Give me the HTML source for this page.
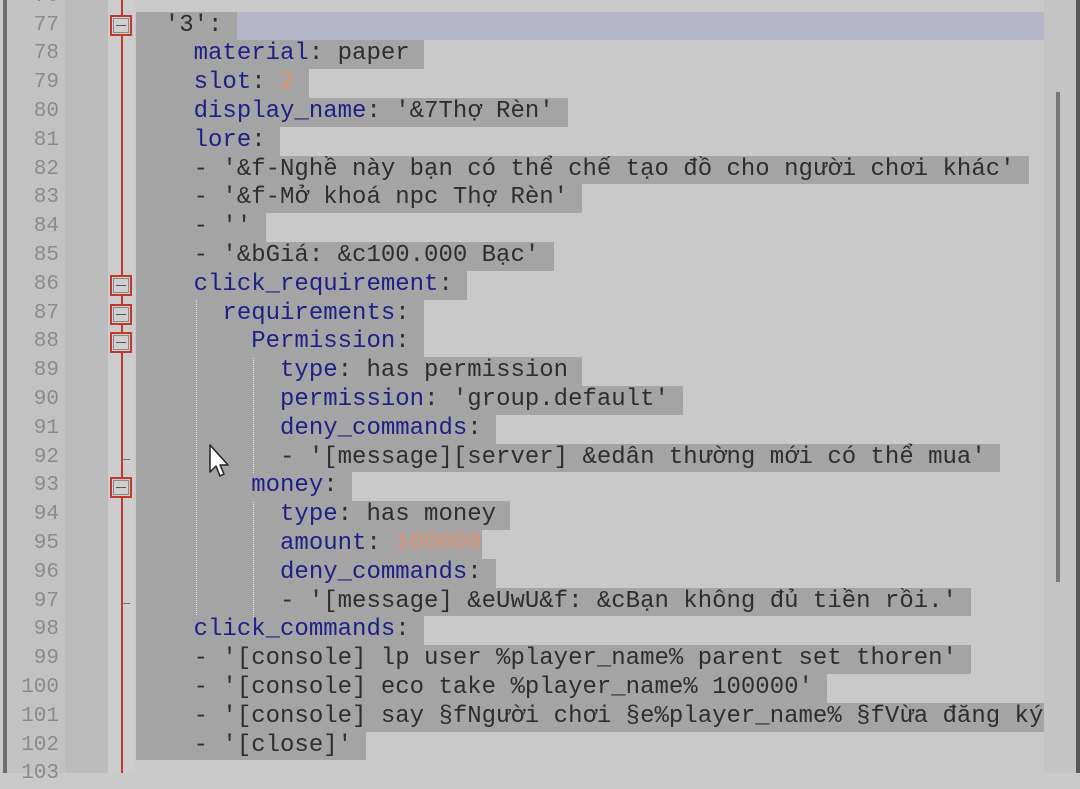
<!DOCTYPE html>
<html><head><meta charset="utf-8"><style>
html,body{margin:0;padding:0;width:1080px;height:773px;overflow:hidden;background:#c9c9c9;}
.ln{position:absolute;left:7px;top:0;width:58px;height:773px;background:#c2c2c2;}
.ln2{position:absolute;left:65px;top:0;width:43px;height:773px;background:#bcbcbc;}
.fm{position:absolute;left:108px;top:0;width:27px;height:773px;background:#cdcdcd;}
.bl{position:absolute;left:3px;top:0;width:4px;height:773px;background:#6e6e6e;}
.num{position:absolute;left:7px;width:52px;text-align:right;font:21px "Liberation Mono",monospace;color:#8a8a8a;height:28.8px;line-height:28.8px;}
.txt{position:absolute;left:136px;top:0;width:908px;height:773px;overflow:hidden;}
.line{position:absolute;left:0;height:28.8px;white-space:pre;font:24px "Liberation Mono","DejaVu Sans Mono",monospace;line-height:28.8px;color:#2e2e2e;}
.sel{display:inline-block;height:28.8px;background:#a4a4a4;}
.k{color:#1f1f88;}
.n{color:#e0906e;}
.cur{position:absolute;left:0;width:908px;height:28.8px;background:#b5b5c8;}
.fold{position:absolute;left:110px;width:22px;height:21px;box-sizing:border-box;border:2px solid #c0392b;background:#cfcfcf;}
.fold i{position:absolute;left:1px;top:1px;right:1px;bottom:1px;border:1px solid #8a8a8a;}
.fold b{position:absolute;left:4px;right:4px;top:8px;height:1px;background:#555;}
.rl{position:absolute;left:121px;width:2px;background:#c0392b;}
.tick{position:absolute;left:122px;width:8px;height:1px;background:#777;}
.guide{position:absolute;width:0;border-left:1px dotted #e4e4e4;}
.side{position:absolute;left:1044px;top:0;width:32px;height:773px;background:#c4c4c4;}
.thumb{position:absolute;left:1056px;top:92px;width:4px;height:490px;background:#777;}
.rb{position:absolute;left:1076px;top:0;width:4px;height:773px;background:#5a5a5a;}
</style></head><body>
<div class="bl"></div><div class="ln"></div><div class="ln2"></div><div class="fm"></div>
<div class="side"></div><div class="thumb"></div><div class="rb"></div>

<div class="num" style="top:-17.2px">76</div>
<div class="num" style="top:11.6px">77</div>
<div class="num" style="top:40.4px">78</div>
<div class="num" style="top:69.2px">79</div>
<div class="num" style="top:98px">80</div>
<div class="num" style="top:126.8px">81</div>
<div class="num" style="top:155.6px">82</div>
<div class="num" style="top:184.4px">83</div>
<div class="num" style="top:213.2px">84</div>
<div class="num" style="top:242px">85</div>
<div class="num" style="top:270.8px">86</div>
<div class="num" style="top:299.6px">87</div>
<div class="num" style="top:328.4px">88</div>
<div class="num" style="top:357.2px">89</div>
<div class="num" style="top:386px">90</div>
<div class="num" style="top:414.8px">91</div>
<div class="num" style="top:443.6px">92</div>
<div class="num" style="top:472.4px">93</div>
<div class="num" style="top:501.2px">94</div>
<div class="num" style="top:530px">95</div>
<div class="num" style="top:558.8px">96</div>
<div class="num" style="top:587.6px">97</div>
<div class="num" style="top:616.4px">98</div>
<div class="num" style="top:645.2px">99</div>
<div class="num" style="top:674px">100</div>
<div class="num" style="top:702.8px">101</div>
<div class="num" style="top:731.6px">102</div>
<div class="num" style="top:760.4px">103</div>

<div class="rl" style="top:0;height:773px"></div>
<div class="tick" style="top:459px"></div>
<div class="tick" style="top:603px"></div>
<div class="fold" style="top:15px"><i></i><b></b></div>
<div class="fold" style="top:275px"><i></i><b></b></div>
<div class="fold" style="top:304px"><i></i><b></b></div>
<div class="fold" style="top:332px"><i></i><b></b></div>
<div class="fold" style="top:477px"><i></i><b></b></div>

<div class="txt">
<div class="cur" style="top:11.6px"></div>
<div style="position:absolute;left:0;top:13px;width:3px;height:26px;background:#7a3fb0"></div>
<div class="line" style="top:11.6px"><span class="sel">  '3': </span></div>
<div class="line" style="top:40.4px"><span class="sel">    <span class="k">material</span>: paper </span></div>
<div class="line" style="top:69.2px"><span class="sel">    <span class="k">slot</span>: <span class="n">2</span> </span></div>
<div class="line" style="top:98px"><span class="sel">    <span class="k">display_name</span>: '&amp;7Thợ Rèn' </span></div>
<div class="line" style="top:126.8px"><span class="sel">    <span class="k">lore</span>: </span></div>
<div class="line" style="top:155.6px"><span class="sel">    - '&amp;f-Nghề này bạn có thể chế tạo đồ cho người chơi khác' </span></div>
<div class="line" style="top:184.4px"><span class="sel">    - '&amp;f-Mở khoá npc Thợ Rèn' </span></div>
<div class="line" style="top:213.2px"><span class="sel">    - '' </span></div>
<div class="line" style="top:242px"><span class="sel">    - '&amp;bGiá: &amp;c100.000 Bạc' </span></div>
<div class="line" style="top:270.8px"><span class="sel">    <span class="k">click_requirement</span>: </span></div>
<div class="line" style="top:299.6px"><span class="sel">      <span class="k">requirements</span>: </span></div>
<div class="line" style="top:328.4px"><span class="sel">        <span class="k">Permission</span>: </span></div>
<div class="line" style="top:357.2px"><span class="sel">          <span class="k">type</span>: has permission </span></div>
<div class="line" style="top:386px"><span class="sel">          <span class="k">permission</span>: 'group.default' </span></div>
<div class="line" style="top:414.8px"><span class="sel">          <span class="k">deny_commands</span>: </span></div>
<div class="line" style="top:443.6px"><span class="sel">          - '[message][server] &amp;edân thường mới có thể mua' </span></div>
<div class="line" style="top:472.4px"><span class="sel">        <span class="k">money</span>: </span></div>
<div class="line" style="top:501.2px"><span class="sel">          <span class="k">type</span>: has money </span></div>
<div class="line" style="top:530px"><span class="sel">          <span class="k">amount</span>: <span class="n">100000</span></span></div>
<div class="line" style="top:558.8px"><span class="sel">          <span class="k">deny_commands</span>: </span></div>
<div class="line" style="top:587.6px"><span class="sel">          - '[message] &amp;eUwU&amp;f: &amp;cBạn không đủ tiền rồi.' </span></div>
<div class="line" style="top:616.4px"><span class="sel">    <span class="k">click_commands</span>: </span></div>
<div class="line" style="top:645.2px"><span class="sel">    - '[console] lp user %player_name% parent set thoren' </span></div>
<div class="line" style="top:674px"><span class="sel">    - '[console] eco take %player_name% 100000' </span></div>
<div class="line" style="top:702.8px"><span class="sel">    - '[console] say §fNgười chơi §e%player_name% §fVừa đăng ký thành công</span></div>
<div class="line" style="top:731.6px"><span class="sel">    - '[close]' </span></div>
<div class="guide" style="left:60px;top:300px;height:315px"></div>
<div class="guide" style="left:117px;top:358px;height:115px"></div>
<div class="guide" style="left:117px;top:502px;height:115px"></div>
</div>

<svg style="position:absolute;left:209px;top:444px" width="24" height="36" viewBox="0 0 24 36">
<path d="M1 1 L1 28 L7 22 L11 32 L15 30 L11 21 L19 21 Z" fill="#fff" stroke="#222" stroke-width="1.5" stroke-linejoin="round"/>
</svg>
</body></html>
